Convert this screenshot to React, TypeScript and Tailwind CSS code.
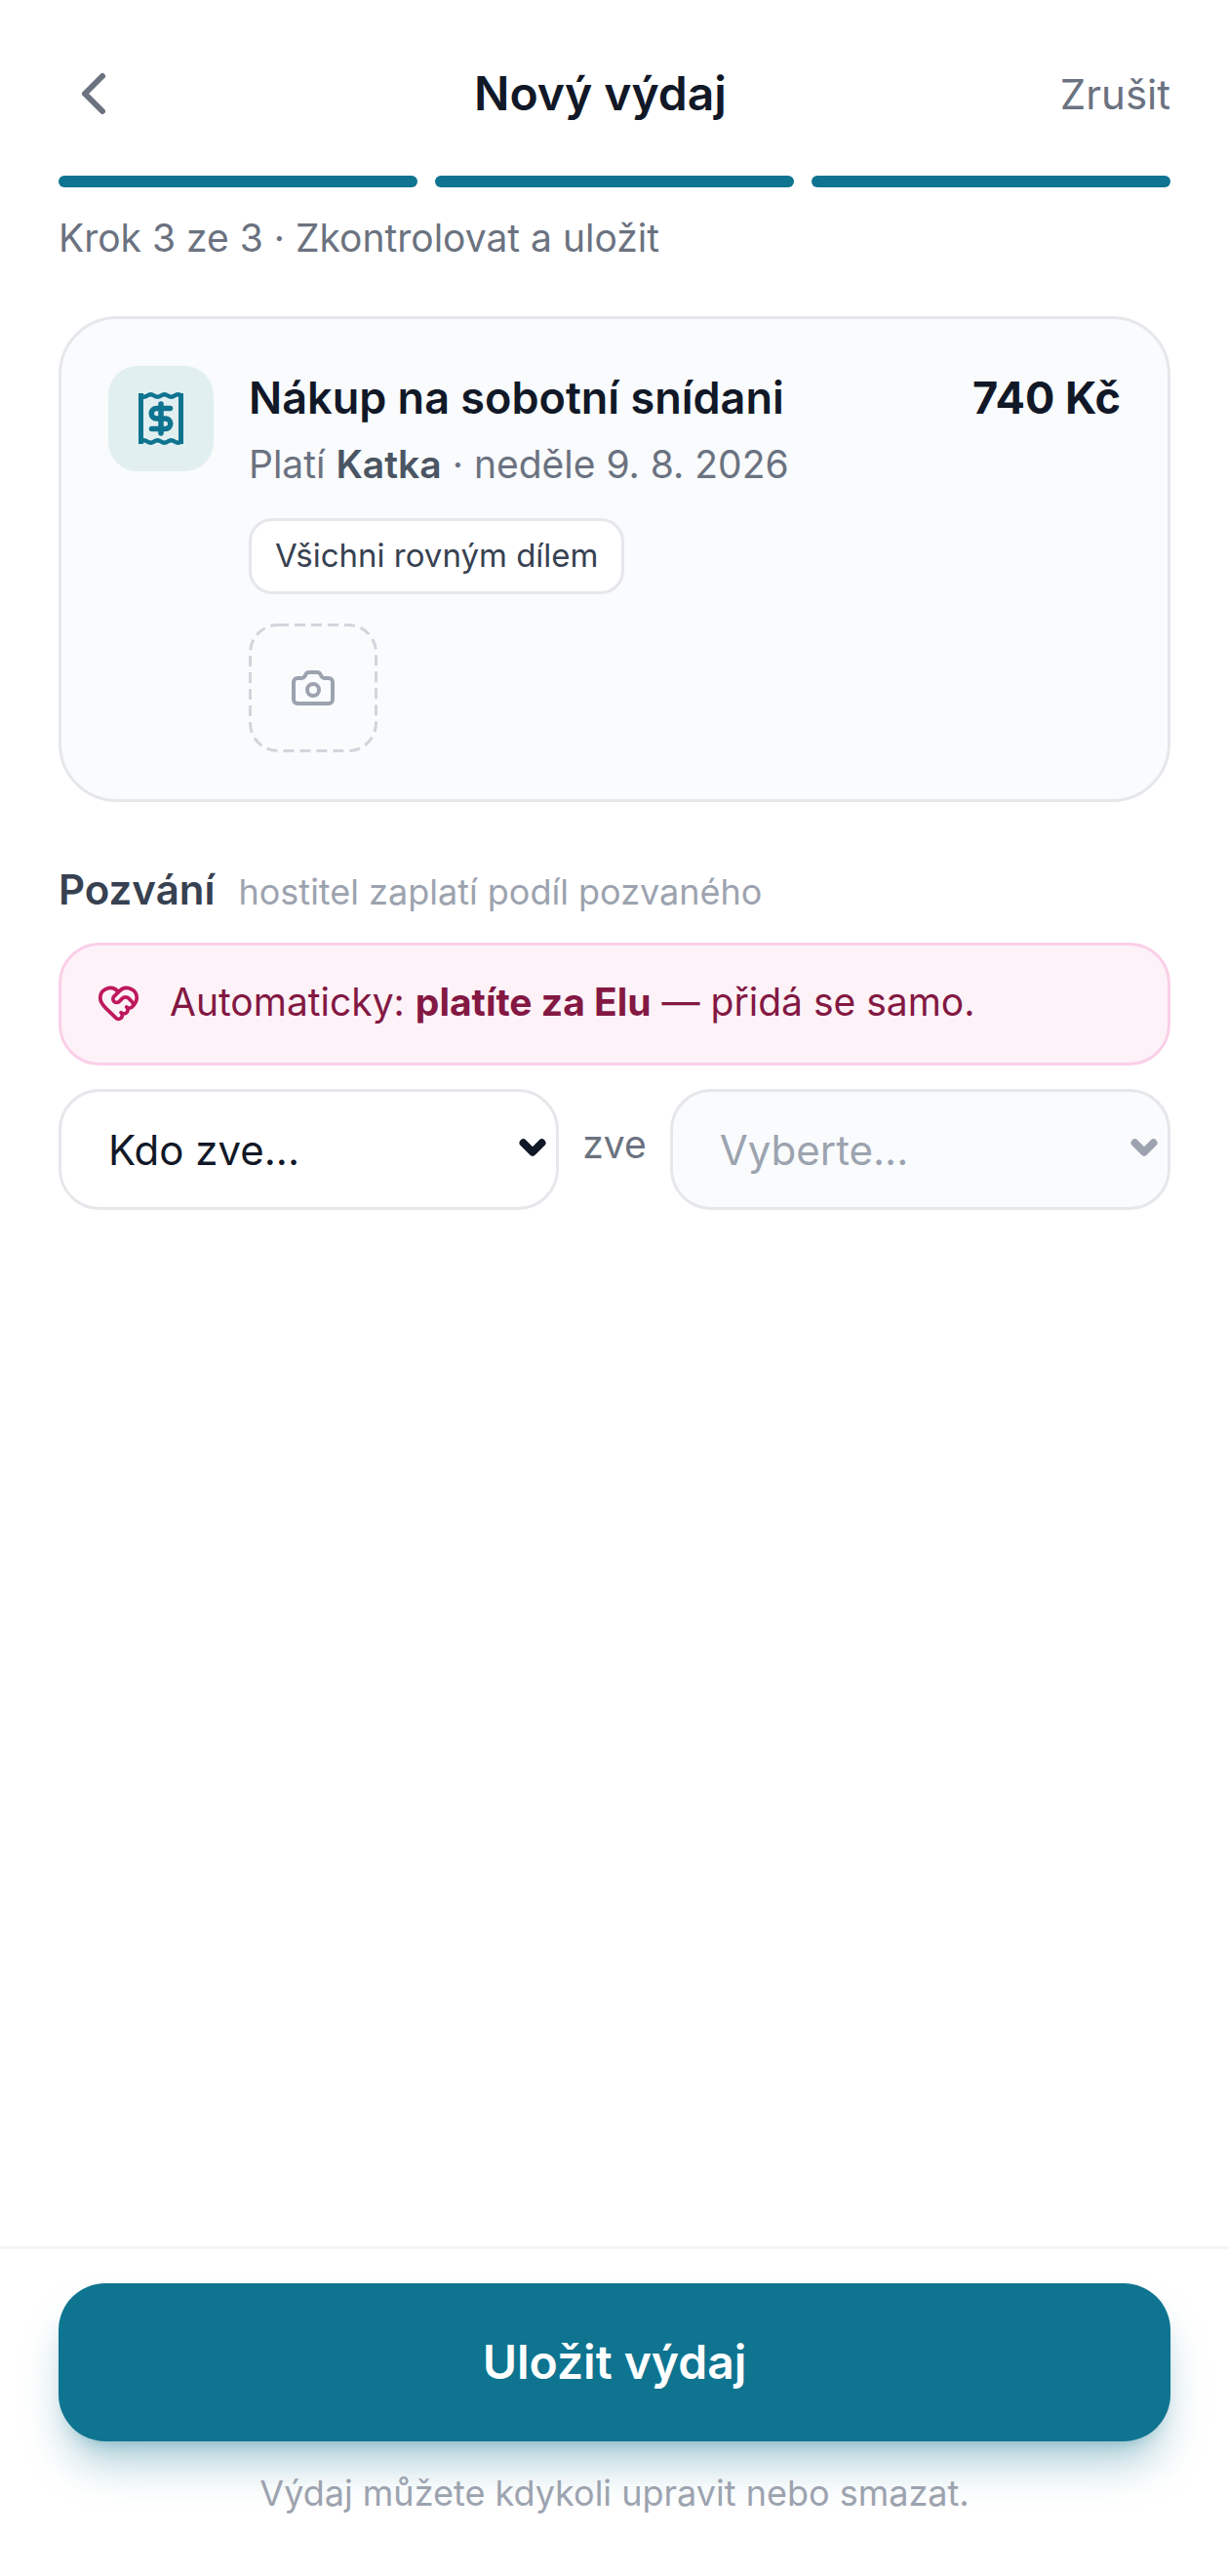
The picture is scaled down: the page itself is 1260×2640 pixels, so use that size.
import { Camera, ChevronDown, ChevronLeft, HeartHandshake } from "lucide-react";

const inter = "font-['Inter',sans-serif]";

const ReceiptIcon = () => (
  <svg viewBox="0 0 46 54" className="h-[54px] w-[46px] text-[#0e7490]" fill="none" stroke="currentColor" strokeWidth="5">
    <path d="M2.5 1v52M43.5 1v52" />
    <path d="M2 3.5q3.5 2.4 7 0t7 0 7 0 7 0 7 0 7 0" strokeWidth="4.5" />
    <path d="M2 50.5q3.5 -2.4 7 0t7 0 7 0 7 0 7 0 7 0" strokeWidth="4.5" />
    <path d="M32.5 16.5H18.5a5.25 5.25 0 0 0 0 10.5h9a5.25 5.25 0 0 1 0 10.5H13.5" strokeWidth="5.5" strokeLinecap="round" />
    <path d="M23 12v30" strokeWidth="5.5" strokeLinecap="round" />
  </svg>
);

const App = () => {
  return (
    <div className={`flex h-[2640px] w-[1260px] flex-col bg-white ${inter}`}>
      <header className="flex h-[180px] shrink-0 items-center justify-between px-[60px] pt-[12px]">
        <button className="flex w-[84px] items-center text-[#6b7280]">
          <ChevronLeft size={72} strokeWidth={2} />
        </button>
        <h1 className="text-[48px] font-semibold text-[#111827]">Nový výdaj</h1>
        <button className="text-[42px] text-[#6b7280]">Zrušit</button>
      </header>

      <main className="flex-1 px-[60px]">
        <div className="flex gap-[18px]">
          <div className="h-[12px] flex-1 rounded-full bg-[#0e7490]" />
          <div className="h-[12px] flex-1 rounded-full bg-[#0e7490]" />
          <div className="h-[12px] flex-1 rounded-full bg-[#0e7490]" />
        </div>
        <p className="mt-[23px] text-[39px] leading-[58px] text-[#6b7280]">Krok 3 ze 3 · Zkontrolovat a uložit</p>

        <section className="mt-[51px] flex gap-[36px] rounded-[60px] border-[3px] border-[#e5e7eb] bg-[#f9fbfd] p-[48px]">
          <div className="flex h-[108px] w-[108px] shrink-0 items-center justify-center rounded-[30px] bg-[#e2eff0]">
            <ReceiptIcon />
          </div>
          <div className="flex-1">
            <div className="flex items-start justify-between">
              <h2 className="text-[45px] leading-[66px] font-semibold text-[#111827]">Nákup na sobotní snídani</h2>
              <span className="text-[45px] leading-[66px] font-bold text-[#111827]">740 Kč</span>
            </div>
            <p className="mt-[6px] text-[39px] leading-[58px] text-[#6b7280]">
              Platí <b className="font-semibold text-[#4b5563]">Katka</b> · neděle 9. 8. 2026
            </p>
            <div className="mt-[26px] inline-flex h-[78px] items-center rounded-[24px] border-[3px] border-[#e5e7eb] bg-white px-[24px] text-[33px] text-[#374151]">
              Všichni rovným dílem
            </div>
            <div className="relative mt-[30px] flex h-[132px] w-[132px] items-center justify-center">
              <svg viewBox="0 0 132 132" className="absolute inset-0 h-full w-full" fill="none">
                <rect x="1.5" y="1.5" width="129" height="129" rx="28.5" stroke="#d1d5db" strokeWidth="3" strokeDasharray="11 6" />
              </svg>
              <Camera size={48} strokeWidth={2} className="text-[#9ca3af]" />
            </div>
          </div>
        </section>

        <div className="mt-[58px] flex items-baseline gap-[24px]">
          <h3 className="text-[42px] font-semibold text-[#374151]">Pozvání</h3>
          <span className="text-[36px] text-[#9ca3af]">hostitel zaplatí podíl pozvaného</span>
        </div>

        <div className="mt-[23px] flex h-[126px] items-center gap-[30px] rounded-[42px] border-[3px] border-[#fbcfe8] bg-[#fdf2f8] px-[36px] pb-[3px] text-[39px] text-[#831843]">
          <HeartHandshake size={45} strokeWidth={2} className="text-[#be185d]" />
          <span>
            Automaticky: <b className="font-bold">platíte za Elu</b> — přidá se samo.
          </span>
        </div>

        <div className="mt-[24px] flex items-center gap-[24px]">
          <div className="relative flex-1">
            <select className="h-[124px] w-full appearance-none rounded-[42px] border-[3px] border-[#e5e7eb] bg-white px-[48px] text-[42px] text-[#111827]">
              <option>Kdo zve...</option>
            </select>
            <ChevronDown size={38} strokeWidth={5} className="pointer-events-none absolute top-[41px] right-[8px] text-[#111827]" />
          </div>
          <span className="pb-[10px] text-[39px] text-[#6b7280]">zve</span>
          <div className="relative flex-1">
            <select disabled className="h-[124px] w-full appearance-none rounded-[42px] border-[3px] border-[#e5e7eb] bg-[#f9fbfd] px-[48px] text-[42px] text-[#9ca3af] opacity-100">
              <option>Vyberte...</option>
            </select>
            <ChevronDown size={38} strokeWidth={5} className="pointer-events-none absolute top-[41px] right-[8px] text-[#9ca3af]" />
          </div>
        </div>
      </main>

      <footer className="flex h-[338px] shrink-0 flex-col border-t-[3px] border-[#f3f4f6] px-[60px] pt-[35px]">
        <button className="h-[162px] rounded-[48px] bg-[#0e7490] text-[48px] font-semibold text-white shadow-[0_30px_45px_-9px_rgba(14,116,144,0.35),0_12px_18px_-12px_rgba(14,116,144,0.35)]">
          Uložit výdaj
        </button>
        <p className="relative mt-[26px] text-center text-[36px] text-[#9ca3af]">Výdaj můžete kdykoli upravit nebo smazat.</p>
      </footer>
    </div>
  );
};

export default App;
